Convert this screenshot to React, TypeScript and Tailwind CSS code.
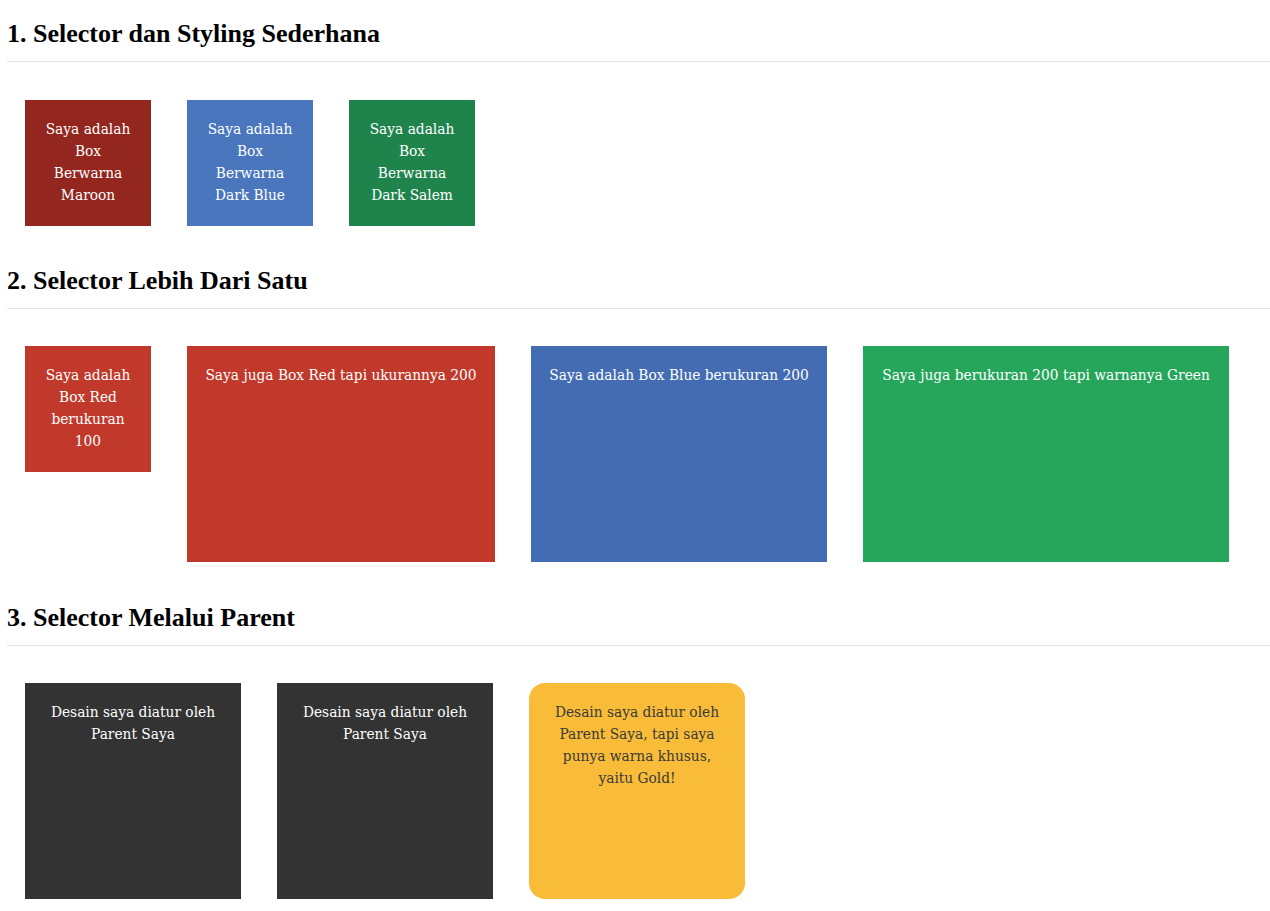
import React from "react";

const body = { fontFamily: '"DejaVu Serif Condensed", "Liberation Serif", serif' };
const head = { fontFamily: '"Liberation Serif", "DejaVu Serif", serif' };

function Heading({ children, top }: { children: React.ReactNode; top: string }) {
  return (
    <div className={`${top} border-b border-[#e5e5e5] pb-[10px]`}>
      <h2 className="h-[34px] text-[26px] leading-[34px] font-bold text-black" style={head}>
        {children}
      </h2>
    </div>
  );
}

export default function App() {
  return (
    <div className="min-h-[911px] bg-white pl-[7px]" style={body}>
      <Heading top="pt-[17px]">1. Selector dan Styling Sederhana</Heading>
      <div className="mt-[38px] flex gap-[36px] pl-[18px] text-[15.3px] leading-[22px] text-white text-center">
        <div className="h-[126px] w-[126px] bg-[#93261e] px-[17px] py-[18px]">Saya adalah Box Berwarna Maroon</div>
        <div className="h-[126px] w-[126px] bg-[#4a76bd] px-[17px] py-[18px]">Saya adalah Box Berwarna Dark Blue</div>
        <div className="h-[126px] w-[126px] bg-[#1f844c] px-[17px] py-[18px]">Saya adalah Box Berwarna Dark Salem</div>
      </div>

      <Heading top="mt-[38px]">2. Selector Lebih Dari Satu</Heading>
      <div className="mt-[37px] flex items-start gap-[36px] pl-[18px] text-[15.3px] leading-[22px] text-white text-center">
        <div className="h-[126px] w-[126px] shrink-0 bg-[#c0392b] px-[17px] py-[18px]">Saya adalah Box Red berukuran 100</div>
        <div className="h-[216px] w-[308px] shrink-0 bg-[#c0392b] px-[10px] py-[18px] whitespace-nowrap">Saya juga Box Red tapi ukurannya 200</div>
        <div className="h-[216px] w-[296px] shrink-0 bg-[#446cb3] px-[10px] py-[18px] whitespace-nowrap">Saya adalah Box Blue berukuran 200</div>
        <div className="h-[216px] w-[366px] shrink-0 bg-[#26a65b] px-[10px] py-[18px] whitespace-nowrap">Saya juga berukuran 200 tapi warnanya Green</div>
      </div>

      <Heading top="mt-[39px]">3. Selector Melalui Parent</Heading>
      <div className="mt-[37px] flex gap-[36px] pl-[18px] text-[15.3px] leading-[22px] text-center">
        <div className="h-[216px] w-[216px] bg-[#333333] p-[18px] text-white">Desain saya diatur oleh Parent Saya</div>
        <div className="h-[216px] w-[216px] bg-[#333333] p-[18px] text-white">Desain saya diatur oleh Parent Saya</div>
        <div className="h-[216px] w-[216px] rounded-[16px] bg-[#f8bc38] p-[18px] text-[#3a3a3a]">
          Desain saya diatur oleh Parent Saya, tapi saya punya warna khusus, yaitu Gold!
        </div>
      </div>
    </div>
  );
}
